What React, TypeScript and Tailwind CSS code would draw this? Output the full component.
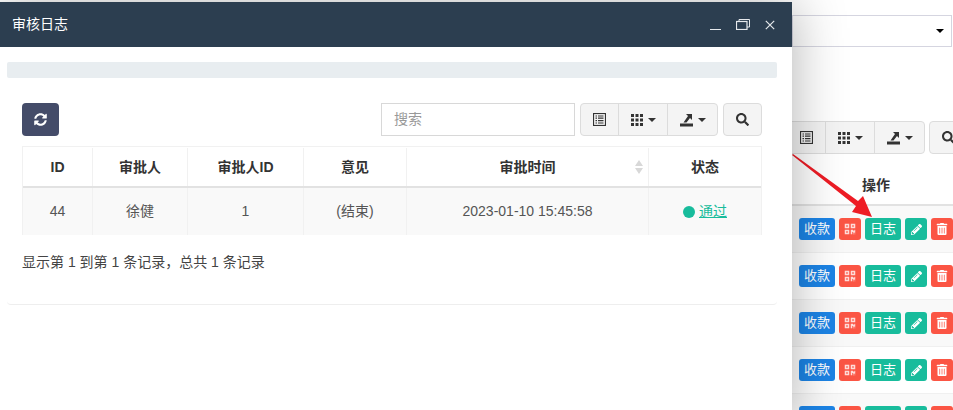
import { FaSearch, FaSyncAlt, FaQrcode, FaPencilAlt, FaTrashAlt } from "react-icons/fa";

const font = "font-['Liberation_Sans','Noto_Sans_CJK_SC',sans-serif]";

function ListIcon() {
  return (
    <svg width="13" height="13" viewBox="0 0 13 13" fill="none" stroke="currentColor">
      <rect x="0.5" y="0.5" width="12" height="12" strokeWidth="1.2" />
      <path d="M2.5 3 H4 M5 3 H10.5 M2.5 5.2 H4 M5 5.2 H10.5 M2.5 7.6 H4 M5 7.6 H10.5 M2.5 10 H4 M5 10 H10.5" strokeWidth="1.2" />
    </svg>
  );
}

function GridIcon() {
  return (
    <svg width="12" height="12" viewBox="0 0 12 12" fill="currentColor">
      {[0, 4.5, 9].map((x) =>
        [0, 4.5, 9].map((y) => <rect key={`${x}-${y}`} x={x} y={y} width="3" height="3" />),
      )}
    </svg>
  );
}

function ExportIcon() {
  return (
    <svg width="13" height="14" viewBox="0 0 13 14" fill="currentColor">
      <rect x="0" y="10.5" width="13" height="3" />
      <path d="M6 1 H12 V7 L10 5 L6.5 9.5 H3.5 L8 3 Z" />
    </svg>
  );
}

function Caret() {
  return <span className="ml-[5px] inline-block h-0 w-0 border-x-4 border-t-4 border-x-transparent border-t-current" />;
}

function ToolbarGroup() {
  const cell = "flex h-full items-center justify-center border-r border-[#dcdcdc] last:border-r-0 text-[#333]";
  return (
    <div className="flex h-[33px] w-[138px] shrink-0 overflow-hidden rounded border border-[#dcdcdc] bg-[#f4f4f4]">
      <div className={`${cell} w-[38px]`}><ListIcon /></div>
      <div className={`${cell} w-[49px]`}><GridIcon /><Caret /></div>
      <div className={`${cell} flex-1`}><ExportIcon /><Caret /></div>
    </div>
  );
}

function SearchButton() {
  return (
    <div className="flex h-[33px] w-[39px] shrink-0 items-center justify-center rounded border border-[#dcdcdc] bg-[#f4f4f4] text-[#333]">
      <FaSearch className="text-[13px]" />
    </div>
  );
}

const columns = [
  { label: "ID", value: "44", w: "w-[70px]" },
  { label: "审批人", value: "徐健", w: "w-[95px]" },
  { label: "审批人ID", value: "1", w: "w-[116px]" },
  { label: "意见", value: "(结束)", w: "w-[103px]" },
];

function ActionRow({ shaded }: { shaded: boolean }) {
  const btn = "flex h-[22px] items-center justify-center rounded-[3px] text-white text-[13px] shrink-0";
  return (
    <div className={`flex h-[47px] shrink-0 items-center gap-1 border-b border-[#f0f0f0] pl-[7px] ${shaded ? "bg-[#f9f9f9]" : "bg-white"}`}>
      <div className={`${btn} w-9 bg-[#1c84e6]`}>收款</div>
      <div className={`${btn} w-[22px] bg-[#fb5544]`}><FaQrcode className="text-[12px] text-[#ffdcd8]" /></div>
      <div className={`${btn} w-9 bg-[#18bc9c]`}>日志</div>
      <div className={`${btn} w-[22px] bg-[#18bc9c]`}><FaPencilAlt className="text-[11px]" /></div>
      <div className={`${btn} w-[22px] bg-[#fb5544]`}><FaTrashAlt className="text-[12px]" /></div>
    </div>
  );
}

export default function App() {
  return (
    <div className={`${font} relative h-[410px] w-[953px] overflow-hidden bg-white text-[14px] text-[#444]`}>
      {/* Page behind the dialog */}
      <div className="ml-[792px] flex h-full flex-col">
        <div className="mt-[15px] flex h-8 w-[160px] shrink-0 items-center justify-end border border-[#d5d5e0] bg-white pr-[7px]">
          <span className="h-0 w-0 border-x-4 border-t-4 border-x-transparent border-t-black" />
        </div>
        <div className="-ml-[5px] mt-[74px] flex w-[240px] shrink-0 gap-1">
          <ToolbarGroup />
          <SearchButton />
        </div>
        <div className="mt-[11px] flex h-[41px] w-[168px] shrink-0 items-center justify-center border-b-2 border-[#e2e2e2] bg-white pt-px font-semibold text-[#333]">
          操作
        </div>
        <ActionRow shaded />
        <ActionRow shaded={false} />
        <ActionRow shaded />
        <ActionRow shaded={false} />
        <ActionRow shaded />
      </div>

      {/* Red annotation arrow */}
      <svg className="absolute left-[792px] top-[150px]" width="90" height="75" viewBox="0 0 90 75">
        <path d="M0 5 L1 4 L66 51 L71 46 L80 67 L60 62 L64 56 Z" fill="#ee1c25" />
      </svg>

      {/* Dialog */}
      <div className="absolute left-0 top-[2px] flex h-[420px] w-[792px] flex-col bg-white shadow-[1px_1px_50px_rgba(0,0,0,0.3)]">
        <div className="flex h-[45px] shrink-0 items-center justify-between bg-[#2c3e50] pl-3 pr-[17px] text-white">
          <span className="text-[14px]">审核日志</span>
          <div className="flex items-center gap-[15px] text-[#e6e9ec]">
            <svg width="11" height="12" viewBox="0 0 11 12"><rect x="0" y="10" width="11" height="1" fill="currentColor" /></svg>
            <svg width="14" height="11" viewBox="0 0 14 11" fill="none" stroke="currentColor"><rect x="0.5" y="2.5" width="10.5" height="8" strokeWidth="1.2" /><path d="M3 2.5 V0.5 H13.5 V8 H11" strokeWidth="1" /></svg>
            <svg width="10" height="10" viewBox="0 0 10 10" stroke="currentColor" strokeWidth="1.2"><path d="M0.8 0.8 L9.2 9.2 M9.2 0.8 L0.8 9.2" /></svg>
          </div>
        </div>

        <div className="ml-[7px] mr-[15px] mt-[15px] h-4 shrink-0 rounded-[2px] bg-[#e8edf0]" />

        <div className="ml-[7px] mr-[15px] flex h-[227px] shrink-0 flex-col rounded-b border-b border-[#eeeeee] px-[15px] pt-[25px]">
          <div className="flex h-[33px] items-start gap-[5px]">
            <div className="mr-auto flex h-[33px] w-[37px] items-center justify-center rounded bg-[#444c69] text-white">
              <FaSyncAlt className="text-[13px]" />
            </div>
            <div className="flex h-[33px] w-[194px] items-center border border-[#d8d8d8] px-3 text-[14px] text-[#999]">搜索</div>
            <ToolbarGroup />
            <SearchButton />
          </div>

          <div className="mt-[10px] w-[740px] border-x border-t border-[#f1f1f1]">
            <div className="flex h-[41px] border-b-2 border-[#e2e2e2] bg-white pt-px font-semibold text-[#333]">
              {columns.map((c) => (
                <div key={c.label} className={`${c.w} flex shrink-0 items-center justify-center border-r border-[#f1f1f1]`}>{c.label}</div>
              ))}
              <div className="relative flex w-[242px] shrink-0 items-center justify-center border-r border-[#f1f1f1]">
                审批时间
                <span className="absolute right-[5px] top-[12px] flex flex-col gap-[2px]">
                  <span className="h-0 w-0 border-x-4 border-b-[6px] border-x-transparent border-b-[#d8d8d8]" />
                  <span className="h-0 w-0 border-x-4 border-t-[6px] border-x-transparent border-t-[#d8d8d8]" />
                </span>
              </div>
              <div className="flex flex-1 items-center justify-center">状态</div>
            </div>
            <div className="flex h-[47px] bg-[#f9f9f9] text-[#555]">
              {columns.map((c) => (
                <div key={c.label} className={`${c.w} flex shrink-0 items-center justify-center border-r border-[#f1f1f1]`}>{c.value}</div>
              ))}
              <div className="flex w-[242px] shrink-0 items-center justify-center border-r border-[#f1f1f1]">2023-01-10 15:45:58</div>
              <div className="flex flex-1 items-center justify-center gap-[4px] text-[#18bc9c]">
                <span className="h-3 w-3 rounded-full bg-[#18bc9c]" />
                <span className="underline">通过</span>
              </div>
            </div>
          </div>

          <div className="mt-[17px] text-[14px] text-[#444]">显示第 1 到第 1 条记录，总共 1 条记录</div>
        </div>
      </div>
    </div>
  );
}
